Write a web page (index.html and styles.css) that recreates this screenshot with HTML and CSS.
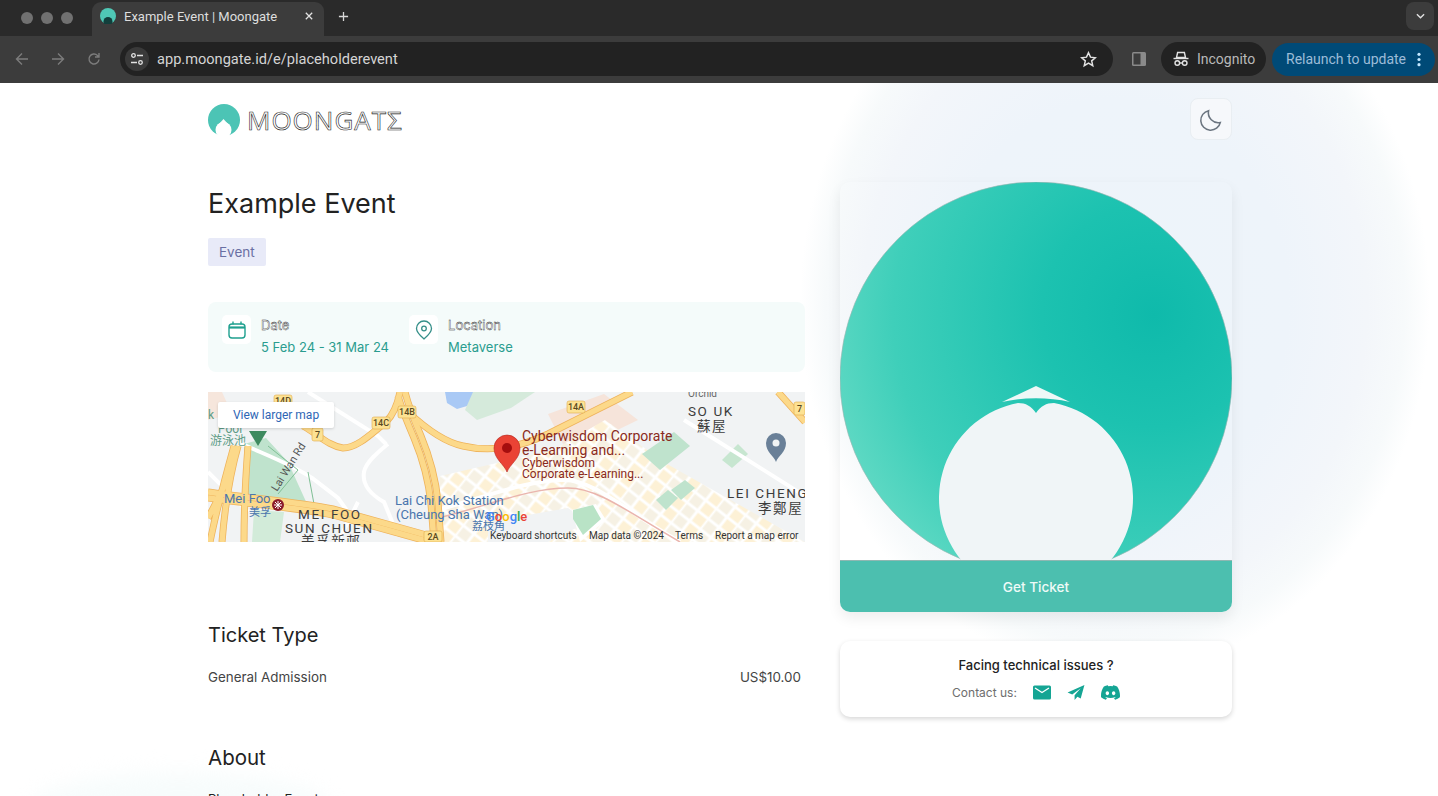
FILE: index.html
```html
<!DOCTYPE html>
<html lang="en">
<head>
    <meta charset="UTF-8">
    <title>Example Event | Moongate</title>
    <link rel="stylesheet" href="styles.css">
</head>
<body>

<div class="tabstrip">
    <div class="lights"><span></span><span></span><span></span></div>
    <div class="tab">
        <svg class="favicon" viewBox="0 0 32 32">
            <circle cx="16" cy="16" r="16" fill="#4fc8b6"/>
            <circle cx="16" cy="27" r="9" fill="#123f3c"/>
        </svg>
        <span class="tab-title">Example Event | Moongate</span>
        <svg class="tab-close" viewBox="0 0 10 10"><path d="M1 1l8 8M9 1l-8 8"/></svg>
    </div>
    <svg class="tab-new" viewBox="0 0 12 12"><path d="M6 1v10M1 6h10"/></svg>
    <div class="tab-list">
        <svg viewBox="0 0 10 6"><path d="M1 1l4 4 4-4"/></svg>
    </div>
</div>

<div class="toolbar">
    <svg class="nav-icon" viewBox="0 0 14 14"><path d="M13 7H2M7 1.5L1.5 7 7 12.5"/></svg>
    <svg class="nav-icon" viewBox="0 0 14 14"><path d="M1 7h11M7 1.5L12.5 7 7 12.5"/></svg>
    <svg class="nav-icon" viewBox="0 0 14 14"><path d="M12 7.5A5 5 0 1 1 10.5 3.4L12 5M12 1v4H8"/></svg>
    <div class="omnibox">
        <div class="site-info">
            <svg viewBox="0 0 14 14"><circle cx="3.5" cy="3.5" r="1.8"/><path d="M7 3.5h6M1 10.5h6"/><circle cx="10.5" cy="10.5" r="1.8"/></svg>
        </div>
        <span class="url">app.moongate.id/e/placeholderevent</span>
        <svg class="star" viewBox="0 0 16 16"><path d="M8 1.6l1.9 4.2 4.5.5-3.4 3 1 4.5L8 11.5l-4 2.3 1-4.5-3.4-3 4.5-.5z"/></svg>
    </div>
    <svg class="side-panel" viewBox="0 0 14 14"><rect width="14" height="14" rx="1.5" fill="#8a8a8a"/><rect x="1.5" y="1.5" width="7" height="11" fill="#3c3c3c"/></svg>
    <div class="incognito">
        <svg viewBox="0 0 16 16">
            <path class="hat" d="M4.6 1.5h6.8l1.1 5h-9z"/>
            <path d="M.5 7.5h15" fill="none"/>
            <circle cx="4.3" cy="12" r="2.3" fill="none"/>
            <circle cx="11.7" cy="12" r="2.3" fill="none"/>
            <path d="M6.6 12h2.8" fill="none"/>
        </svg>
        <span>Incognito</span>
    </div>
    <div class="relaunch">
        <span>Relaunch to update</span>
        <svg viewBox="0 0 4 16"><circle cx="2" cy="2.5" r="1.7"/><circle cx="2" cy="8" r="1.7"/><circle cx="2" cy="13.5" r="1.7"/></svg>
    </div>
</div>

<div class="page">
    <div class="brush"></div>
    <div class="brush-low"></div>

    <div class="layout">
        <div class="left">
            <div class="logo">
                <svg class="logo-mark" viewBox="0 0 32 32">
                    <circle cx="16" cy="16" r="16" fill="#4cc4b5"/>
                    <circle cx="15.5" cy="26" r="8" fill="#fff"/>
                    <path d="M11 20l4.5-5 4.5 5z" fill="#fff"/>
                </svg>
                <span class="logo-text">MOONGATΣ</span>
            </div>

            <h1>Example Event</h1>
            <span class="tag">Event</span>

            <div class="info">
                <div class="info-item">
                    <div class="info-icon">
                        <svg viewBox="0 0 18 18" class="ic-cal"><rect x="1" y="3" width="16" height="14" rx="3"/><path class="thick" d="M1 6.5h16"/><path d="M5 .5v3M13 .5v3"/></svg>
                    </div>
                    <div>
                        <div class="info-label">Date</div>
                        <div class="info-value">5 Feb 24 - 31 Mar 24</div>
                    </div>
                </div>
                <div class="info-item">
                    <div class="info-icon">
                        <svg viewBox="0 0 18 20" class="ic-pin"><path d="M9 19C5 15.5 1.5 12.5 1.5 8.5a7.5 7.5 0 0 1 15 0C16.5 12.5 13 15.5 9 19z"/><circle cx="9" cy="8.5" r="2.3"/></svg>
                    </div>
                    <div>
                        <div class="info-label">Location</div>
                        <div class="info-value">Metaverse</div>
                    </div>
                </div>
            </div>

            <div class="map">
                <svg class="map-art" viewBox="0 0 597 150" width="597" height="150">
                    <defs>
                        <pattern id="blocks" width="27" height="13" patternUnits="userSpaceOnUse" patternTransform="rotate(38)">
                            <rect width="27" height="13" fill="#fff"/>
                            <rect x="1.5" y="1.5" width="11" height="10" fill="#fdf1d6"/>
                            <rect x="14.5" y="1.5" width="11" height="10" fill="#f6f1e4"/>
                        </pattern>
                    </defs>
                    <rect width="597" height="150" fill="#f1f3f4"/>

                    <!-- parks, water and blocks -->
                    <path d="M237 0h36l-4 11-20 6-10-6z" fill="#a9c9f5"/>
                    <path d="M265 0h62l-24 16-34 12-12-10z" fill="#d5eadb"/>
                    <path d="M36 52l22-6 22 24 20 44-30-4-34-4z" fill="#bfe3cd"/>
                    <path d="M46 118l30 2-4 30H44z" fill="#d2ebd9"/>
                    <path d="M0 0h14l10 22-24 6z" fill="#f6e6dc"/>
                    <path d="M340 22l56-20 34 26-70 34z" fill="#f6e4da"/>
                    <path d="M232 84L345 58l52-30 62 44 138 78H232z" fill="url(#blocks)"/>
                    <path d="M476 28l121 76v-90l-30-14H490z" fill="#f1f3f4"/>
                    <path d="M280 130l0 20h60l40-20-20-14z" fill="#f1f3f4"/>
                    <path d="M364 118l24-6 10 16-26 22z" fill="#fff"/>
                    <path d="M365 118l20-5 8 14-18 16-10-16z" fill="#b9e3c6"/>
                    <path d="M434 62l32-22 16 14-30 24z" fill="#bfe3cd"/>
                    <path d="M514 68l16-16 10 10-16 14z" fill="#c7e6d0"/>
                    <path d="M463 98l14-10 10 8-14 12z" fill="#bfe3cd"/>
                    <path d="M448 108l12-10 10 8-12 12z" fill="#bfe3cd"/>

                    <!-- white streets -->
                    <g class="street">
                        <path d="M100 0l70 44 8 8"/>
                        <path d="M180 52c-10 8-22 18-24 28-2 12 6 22 20 30l14 34"/>
                        <path d="M30 50c20 10 50 20 74 36l26 20 10 14"/>
                        <path d="M0 80l40 40M130 150l20-40"/>
                        <path d="M476 28l121 76"/>
                        <path d="M230 118c50-14 90-30 126-30 30 0 60 30 116 62"/>
                    </g>
                    <path class="rail" d="M230 126c50-12 90-30 130-30 30 0 60 24 112 54"/>
                    <path class="park-line" d="M60 54l30 24-20 24M100 80l6 32"/>

                    <!-- highways -->
                    <g class="hw-edge">
                        <path d="M95 34C110 42 120 54 135 56 150 56 165 40 178 30 186 22 190 10 192 0"/>
                        <path d="M190 4C194 18 200 32 206 46 216 70 221 92 223 112L226 150"/>
                        <path d="M197 0C201 16 207 30 213 44 223 68 228 90 230 110L233 150"/>
                        <path d="M200 20C215 34 235 50 255 54 280 60 310 56 340 42L424 0"/>
                        <path d="M0 100C40 106 90 110 125 117L222 144"/>
                        <path d="M0 106C40 112 90 116 125 123L222 150"/>
                        <path d="M30 54C24 75 18 100 14 150M40 54C38 80 36 110 36 150M0 126C12 104 24 80 30 54M26 54C16 90 8 120 2 150"/>
                        <path d="M570 0l27 30"/>
                    </g>
                    <g class="hw">
                        <path d="M95 34C110 42 120 54 135 56 150 56 165 40 178 30 186 22 190 10 192 0"/>
                        <path d="M190 4C194 18 200 32 206 46 216 70 221 92 223 112L226 150"/>
                        <path d="M197 0C201 16 207 30 213 44 223 68 228 90 230 110L233 150"/>
                        <path d="M200 20C215 34 235 50 255 54 280 60 310 56 340 42L424 0"/>
                        <path d="M0 100C40 106 90 110 125 117L222 144"/>
                        <path d="M0 106C40 112 90 116 125 123L222 150"/>
                        <path d="M30 54C24 75 18 100 14 150M40 54C38 80 36 110 36 150M0 126C12 104 24 80 30 54M26 54C16 90 8 120 2 150"/>
                        <path d="M570 0l27 30"/>
                    </g>

                    <!-- shields -->
                    <g class="shield">
                        <rect x="66" y="3" width="18" height="12" rx="2"/><text x="75" y="12">14D</text>
                        <rect x="190" y="14" width="18" height="12" rx="2"/><text x="199" y="23">14B</text>
                        <rect x="164" y="25" width="18" height="12" rx="2"/><text x="173" y="34">14C</text>
                        <rect x="104" y="36" width="11" height="13" rx="2"/><text x="109.5" y="46">7</text>
                        <rect x="216" y="139" width="18" height="11" rx="2"/><text x="225" y="148">2A</text>
                        <rect x="359" y="9" width="18" height="12" rx="2"/><text x="368" y="18">14A</text>
                        <rect x="586" y="10" width="11" height="13" rx="2"/><text x="591.5" y="20">7</text>
                    </g>

                    <!-- labels -->
                    <text class="l-green" x="0" y="27">k</text>
                    <text class="l-green" x="10" y="41">Pool</text>
                    <text class="l-green" x="2" y="53">游泳池</text>
                    <path d="M41 39h18l-9 15z" fill="#3e8a5f"/>
                    <text class="l-road" transform="translate(69 100) rotate(-58)">Lai Wan Rd</text>
                    <text class="l-blue" x="16" y="111">Mei Foo</text>
                    <text class="l-blue small-cjk" x="41" y="124">美孚</text>
                    <circle cx="70" cy="113" r="6" fill="#8c1c2c"/>
                    <path d="M66 113h8M70 109v8M67 110l6 6M73 110l-6 6" stroke="#fff" fill="none"/>
                    <text class="l-area" x="90" y="127">MEI FOO</text>
                    <text class="l-area" x="77" y="141">SUN CHUEN</text>
                    <text class="l-area" x="93" y="154">美孚新邨</text>
                    <text class="l-blue" x="187" y="113">Lai Chi Kok Station</text>
                    <text class="l-blue" x="188" y="127">(Cheung Sha Wan)</text>
                    <text class="l-blue small-cjk" x="264" y="138">荔枝角</text>
                    <text class="l-google" x="278" y="129"><tspan fill="#4285f4">G</tspan><tspan fill="#ea4335">o</tspan><tspan fill="#fbbc04">o</tspan><tspan fill="#4285f4">g</tspan><tspan fill="#34a853">l</tspan><tspan fill="#ea4335">e</tspan></text>
                    <text class="l-orchid" x="480" y="5">Orchid</text>
                    <text class="l-area" x="480" y="24">SO UK</text>
                    <text class="l-area" x="489" y="39">蘇屋</text>
                    <text class="l-area" x="519" y="106">LEI CHENG</text>
                    <text class="l-area" x="550" y="121">李鄭屋</text>

                    <text class="l-red" x="314" y="49">Cyberwisdom Corporate</text>
                    <text class="l-red" x="314" y="63">e-Learning and...</text>
                    <text class="l-red-sm" x="314" y="75">Cyberwisdom</text>
                    <text class="l-red-sm" x="314" y="86">Corporate e-Learning...</text>

                    <!-- pins -->
                    <path d="M299 80c-3-8-13-13-13-24a13 13 0 0 1 26 0c0 11-10 16-13 24z" fill="#ea4335" stroke="#b3261e" stroke-width=".6"/>
                    <circle cx="299" cy="56" r="5" fill="#a50e0e"/>
                    <path d="M568 70c-2-6-10-10-10-19a10 10 0 0 1 20 0c0 9-8 13-10 19z" fill="#6a8098"/>
                    <circle cx="568" cy="51" r="3.5" fill="#f1f3f4"/>

                    <!-- attribution -->
                    <text class="l-foot" x="282" y="147">Keyboard shortcuts</text>
                    <text class="l-foot" x="381" y="147">Map data ©2024</text>
                    <text class="l-foot" x="467" y="147">Terms</text>
                    <text class="l-foot" x="507" y="147">Report a map error</text>
                </svg>
                <div class="map-link">View larger map</div>
            </div>

            <h2 class="ticket-head">Ticket Type</h2>
            <div class="ticket-row">
                <span>General Admission</span>
                <span>US$10.00</span>
            </div>

            <h2 class="about-head">About</h2>
            <p class="about-text">Placeholder Event</p>
        </div>

        <div class="right">
            <div class="mode-btn">
                <svg viewBox="0 0 24 24"><path d="M20.5 14.8A9.5 9.5 0 0 1 9.2 3.5a9.5 9.5 0 1 0 11.3 11.3z"/></svg>
            </div>

            <div class="ticket-card">
                <svg class="moon" viewBox="0 0 392 378" width="392" height="378">
                    <defs>
                        <radialGradient id="moonFill" cx=".8" cy=".34" r=".95">
                            <stop offset="0" stop-color="#0fbaab"/>
                            <stop offset=".3" stop-color="#1cc2b0"/>
                            <stop offset=".7" stop-color="#3fcfba"/>
                            <stop offset="1" stop-color="#6fdec8"/>
                        </radialGradient>
                    </defs>
                    <circle cx="196" cy="196" r="196" fill="url(#moonFill)" stroke="#9fb5b2" stroke-width=".6"/>
                    <path d="M196 231c-5-7-10-10-18-10A97 97 0 1 0 214 221c-8 0-13 3-18 10z" fill="#f0f5f7"/>
                    <path d="M162 220l34-16 34 16c-22-5-46-5-68 0z" fill="#eef8f7"/>
                </svg>
                <div class="get-ticket">Get Ticket</div>
            </div>

            <div class="help-card">
                <div class="help-title">Facing technical issues ?</div>
                <div class="help-row">
                    <span class="help-label">Contact us:</span>
                    <svg class="help-icon" viewBox="0 0 18 14"><rect width="18" height="14" rx="1.5"/><path d="M2 2.5L9 7l7-4.5" fill="none" stroke="#fff" stroke-width="1.3"/></svg>
                    <svg class="help-icon" viewBox="0 0 18 16"><path d="M18 0L0 8l5 2 9-6.5L7.5 11v5l3-3.5 3.5 2z"/></svg>
                    <svg class="help-icon discord" viewBox="0 0 16 16"><path d="M13.545 2.907a13.2 13.2 0 0 0-3.257-1.011.05.05 0 0 0-.052.025c-.141.25-.297.577-.406.833a12.2 12.2 0 0 0-3.658 0 8 8 0 0 0-.412-.833.05.05 0 0 0-.052-.025c-1.125.194-2.22.534-3.257 1.011a.04.04 0 0 0-.021.018C.356 6.024-.213 9.047.066 12.032q.003.022.021.037a13.3 13.3 0 0 0 3.995 2.02.05.05 0 0 0 .056-.019q.463-.63.818-1.329a.05.05 0 0 0-.01-.059l-.018-.011a9 9 0 0 1-1.248-.595.05.05 0 0 1-.02-.066l.015-.019q.127-.095.248-.195a.05.05 0 0 1 .051-.007c2.619 1.196 5.454 1.196 8.041 0a.05.05 0 0 1 .053.007q.121.1.248.195a.05.05 0 0 1-.004.085 8 8 0 0 1-1.249.594.05.05 0 0 0-.03.03.05.05 0 0 0 .003.041c.24.465.515.909.817 1.329a.05.05 0 0 0 .056.019 13.2 13.2 0 0 0 4.001-2.02.05.05 0 0 0 .021-.037c.334-3.451-.559-6.449-2.366-9.106a.03.03 0 0 0-.02-.019m-8.198 7.307c-.789 0-1.438-.724-1.438-1.612s.637-1.613 1.438-1.613c.807 0 1.45.73 1.438 1.613 0 .888-.637 1.612-1.438 1.612m5.316 0c-.788 0-1.438-.724-1.438-1.612s.637-1.613 1.438-1.613c.807 0 1.451.73 1.438 1.613 0 .888-.631 1.612-1.438 1.612"/></svg>
                </div>
            </div>
        </div>
    </div>
</div>

</body>
</html>
```
FILE: styles.css
```css
html, body {
    margin: 0;
    padding: 0;
    height: 796px;
    overflow: hidden;
}
body {
    font-family: Inter, "Liberation Sans", sans-serif;
    color: #222;
    background-color: #fff;
}

/* browser chrome */
.tabstrip {
    height: 36px;
    background-color: #2a2a2a;
    display: flex;
    align-items: flex-end;
    font-family: Roboto, sans-serif;
}
.lights {
    display: flex;
    gap: 8px;
    padding: 0 19px 0 21px;
    align-self: center;
}
.lights span {
    width: 12px;
    height: 12px;
    border-radius: 50%;
    background-color: #717171;
}
.tab {
    width: 232px;
    height: 34px;
    box-sizing: border-box;
    padding: 0 11px 6px 8px;
    display: flex;
    align-items: center;
    gap: 8px;
    background-color: #3c3c3c;
    border-radius: 9px 9px 0 0;
}
.favicon {
    width: 16px;
    height: 16px;
}
.tab-title {
    flex: 1;
    font-size: 13px;
    color: #dedede;
}
.tab-close {
    width: 8px;
    height: 8px;
    fill: none;
    stroke: #e3e3e3;
    stroke-width: 1.6;
}
.tab-new {
    width: 11px;
    height: 11px;
    margin: 0 0 14px 14px;
    fill: none;
    stroke: #d8d8d8;
    stroke-width: 1.4;
}
.tab-list {
    margin: 0 4px 6px auto;
    width: 28px;
    height: 28px;
    border-radius: 8px;
    background-color: #3c3c3c;
    display: flex;
    align-items: center;
    justify-content: center;
}
.tab-list svg {
    width: 9px;
    height: 6px;
    fill: none;
    stroke: #e3e3e3;
    stroke-width: 1.5;
}

.toolbar {
    height: 47px;
    box-sizing: border-box;
    padding: 6px 3px 7px 15px;
    background-color: #3c3c3c;
    display: flex;
    align-items: center;
}
.nav-icon {
    width: 14px;
    height: 14px;
    margin-right: 22px;
    fill: none;
    stroke: #7c7c7c;
    stroke-width: 1.4;
}
.omnibox {
    width: 993px;
    height: 34px;
    margin-left: -3px;
    box-sizing: border-box;
    padding: 0 16px 0 5px;
    border-radius: 17px;
    background-color: #222;
    display: flex;
    align-items: center;
    font-family: Roboto, sans-serif;
}
.site-info {
    width: 24px;
    height: 24px;
    margin-right: 8px;
    border-radius: 50%;
    background-color: #3a3a3a;
    display: flex;
    align-items: center;
    justify-content: center;
}
.site-info svg {
    width: 14px;
    height: 14px;
    fill: none;
    stroke: #e3e3e3;
    stroke-width: 1.3;
}
.url {
    flex: 1;
    font-size: 14.6px;
    color: #d4d4d4;
}
.star {
    width: 17px;
    height: 17px;
    fill: none;
    stroke: #e3e3e3;
    stroke-width: 1.4;
}
.side-panel {
    width: 14px;
    height: 14px;
    margin: 0 15px 0 19px;
}
.incognito {
    width: 105px;
    height: 34px;
    box-sizing: border-box;
    padding-left: 12px;
    border-radius: 17px;
    background-color: #222;
    display: flex;
    align-items: center;
    gap: 8px;
    font-family: Roboto, sans-serif;
    font-size: 14px;
    color: #b9b9b9;
}
.incognito svg {
    width: 16px;
    height: 16px;
    stroke: #e3e3e3;
    stroke-width: 1.4;
}
.hat {
    fill: #222;
}
.relaunch {
    width: 163px;
    height: 33px;
    margin-left: 6px;
    box-sizing: border-box;
    padding: 0 14px;
    border-radius: 17px;
    background-color: #004a77;
    display: flex;
    align-items: center;
    justify-content: space-between;
    font-family: Roboto, sans-serif;
    font-size: 14px;
    color: #9dbcd8;
}
.relaunch svg {
    width: 4px;
    height: 15px;
    fill: #c2e7ff;
}

/* page */
.page {
    position: relative;
    height: 713px;
    overflow: hidden;
}
.brush {
    position: absolute;
    left: 800px;
    top: -150px;
    width: 630px;
    height: 740px;
    background: radial-gradient(closest-side, #edf4fa 0%, #eef4fa 55%, #f3f6fa 80%, #f7fafb 92%, rgba(255, 255, 255, 0) 100%);
}
.brush-low {
    position: absolute;
    left: 30px;
    top: 690px;
    width: 300px;
    height: 70px;
    border-radius: 50%;
    background-color: #f7fcfc;
    filter: blur(10px);
}
.layout {
    position: relative;
    margin-left: 208px;
    display: grid;
    grid-template-columns: 597px 392px;
    column-gap: 35px;
    align-items: start;
}

.logo {
    display: flex;
    align-items: center;
    gap: 7px;
    padding-top: 21px;
}
.logo-mark {
    width: 32px;
    height: 32px;
}
.logo-text {
    font-family: "Open Sans", sans-serif;
    font-size: 26px;
    line-height: 32px;
    letter-spacing: 1px;
    color: #fff;
    -webkit-text-stroke: .6px #222;
}
h1 {
    margin: 50px 0 0;
    font-size: 27px;
    line-height: 36px;
    font-weight: 400;
    color: #222;
}
.tag {
    display: inline-block;
    margin-top: 16px;
    padding: 0 11px;
    line-height: 28px;
    font-size: 13.5px;
    border-radius: 2px;
    color: #6a6fa3;
    background-color: #e8eaf8;
}
.info {
    margin-top: 36px;
    height: 70px;
    box-sizing: border-box;
    padding: 13px 14px;
    display: flex;
    gap: 20px;
    border-radius: 8px;
    background-color: #f4fbfa;
}
.info-item {
    display: flex;
    gap: 10px;
}
.info-icon {
    width: 29px;
    height: 29px;
    border-radius: 5px;
    background-color: #fff;
    display: flex;
    align-items: center;
    justify-content: center;
}
.ic-cal {
    width: 18px;
    height: 18px;
    fill: none;
    stroke: #1fa08f;
    stroke-width: 1.4;
}
.ic-cal .thick {
    stroke-width: 2.2;
}
.ic-pin {
    width: 18px;
    height: 20px;
    fill: none;
    stroke: #358f89;
    stroke-width: 1.3;
}
.info-label {
    font-size: 13px;
    line-height: 20px;
    color: #fff;
    -webkit-text-stroke: .35px #222;
}
.info-value {
    margin-top: 2px;
    font-size: 13px;
    line-height: 20px;
    color: #2a9d8f;
}

.map {
    position: relative;
    margin-top: 20px;
    height: 150px;
}
.map-art {
    display: block;
    font-family: Roboto, "Noto Sans CJK TC", sans-serif;
}
.map-link {
    position: absolute;
    left: 10px;
    top: 10px;
    width: 116px;
    height: 26px;
    border-radius: 2px;
    background-color: #fff;
    box-shadow: 0 1px 3px rgba(0, 0, 0, .15);
    font-family: Roboto, sans-serif;
    font-size: 12px;
    line-height: 26px;
    text-align: center;
    color: #2f66b5;
}
.street {
    fill: none;
    stroke: #fff;
    stroke-width: 4;
}
.rail {
    fill: none;
    stroke: #eab5ae;
    stroke-width: 1.5;
}
.park-line {
    fill: none;
    stroke: #7fbf95;
    stroke-width: 1;
}
.hw-edge {
    fill: none;
    stroke: #eeb25a;
    stroke-width: 7;
}
.hw {
    fill: none;
    stroke: #fcd98a;
    stroke-width: 5.5;
}
.shield rect {
    fill: #fde293;
    stroke: #e0ac4c;
    stroke-width: .6;
}
.shield text {
    font-size: 9px;
    font-weight: 500;
    text-anchor: middle;
    fill: #5a4a22;
}
.l-green {
    font-size: 12px;
    fill: #5d9c86;
}
.l-road {
    font-size: 11px;
    fill: #555;
}
.l-blue {
    font-size: 13px;
    fill: #4a76ad;
}
.small-cjk {
    font-size: 11px;
}
.l-area {
    font-size: 13.5px;
    letter-spacing: 1.6px;
    fill: #3c3c3c;
}
.l-orchid {
    font-size: 10px;
    fill: #666;
}
.l-red {
    font-size: 14px;
    fill: #8a2a20;
}
.l-red-sm {
    font-size: 12px;
    fill: #8a2a20;
}
.l-google {
    font-size: 13px;
    font-weight: 500;
}
.l-foot {
    font-size: 10px;
    fill: #333;
}

.ticket-head {
    margin: 79px 0 0;
    font-size: 20px;
    line-height: 28px;
    font-weight: 400;
    color: #222;
}
.ticket-row {
    margin-top: 18px;
    padding-right: 4px;
    display: flex;
    justify-content: space-between;
    font-size: 13.4px;
    line-height: 20px;
    color: #444;
}
.about-head {
    margin: 57px 0 0;
    font-size: 20.5px;
    line-height: 28px;
    font-weight: 400;
    color: #222;
}
.about-text {
    margin: 17px 0 0;
    font-size: 13px;
    line-height: 20px;
    color: #222;
}

.right {
    padding-top: 15px;
}
.mode-btn {
    width: 42px;
    height: 42px;
    margin-left: auto;
    box-sizing: border-box;
    border: 1px solid #e9eef2;
    border-radius: 8px;
    background-color: #f6f8fb;
    display: flex;
    align-items: center;
    justify-content: center;
}
.mode-btn svg {
    width: 25px;
    height: 25px;
    fill: none;
    stroke: #6b7580;
    stroke-width: 1.5;
}
.ticket-card {
    margin-top: 42px;
    border-radius: 10px;
    box-shadow: 0 6px 14px rgba(0, 0, 0, .07);
    overflow: hidden;
}
.moon {
    display: block;
}
.get-ticket {
    height: 52px;
    box-sizing: border-box;
    border-top: 1px solid #8fb7b2;
    background-color: #4cbfaf;
    color: #eefaf7;
    font-size: 13.6px;
    font-weight: 500;
    line-height: 52px;
    text-align: center;
}
.help-card {
    margin-top: 29px;
    height: 76px;
    box-sizing: border-box;
    padding-top: 14px;
    border-radius: 10px;
    background-color: #fff;
    box-shadow: 0 2px 5px rgba(0, 0, 0, .16);
    text-align: center;
}
.help-title {
    font-size: 13px;
    line-height: 20px;
    font-weight: 500;
    color: #222;
}
.help-row {
    margin-top: 8px;
    display: flex;
    align-items: center;
    justify-content: center;
    gap: 16px;
}
.help-label {
    font-size: 12px;
    color: #6e6e6e;
}
.help-icon {
    width: 18px;
    height: 15px;
    fill: #15a594;
}
.discord {
    width: 19px;
    height: 19px;
}
```
